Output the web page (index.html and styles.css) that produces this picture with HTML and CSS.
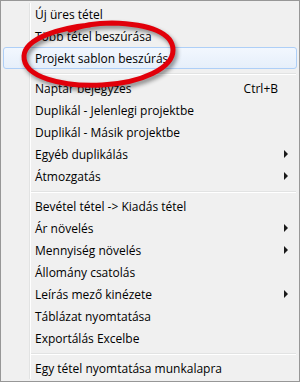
FILE: index.html
```html
<!DOCTYPE html>
<html lang="hu">
<head>
  <meta charset="UTF-8" />
  <title>Menü</title>
  <link rel="stylesheet" href="styles.css">
</head>
<body>
  <div class="menu">
    <ul class="list">
      <li class="item">Új üres tétel</li>
      <li class="item">Több tétel beszúrása</li>
      <li class="item hot">Projekt sablon beszúrás</li>
      <li class="sep"></li>
      <li class="item">Naptár bejegyzés<span class="key">Ctrl+B</span></li>
      <li class="item">Duplikál - Jelenlegi projektbe</li>
      <li class="item">Duplikál - Másik projektbe</li>
      <li class="item">Egyéb duplikálás<span class="arrow"></span></li>
      <li class="item">Átmozgatás<span class="arrow"></span></li>
      <li class="sep"></li>
      <li class="item">Bevétel tétel -&gt; Kiadás tétel</li>
      <li class="item">Ár növelés<span class="arrow"></span></li>
      <li class="item">Mennyiség növelés<span class="arrow"></span></li>
      <li class="item">Állomány csatolás</li>
      <li class="item">Leírás mező kinézete<span class="arrow"></span></li>
      <li class="item">Táblázat nyomtatása</li>
      <li class="item">Exportálás Excelbe</li>
      <li class="sep"></li>
      <li class="item">Egy tétel nyomtatása munkalapra</li>
    </ul>

    <!-- hand drawn red marker over the menu -->
    <svg class="mark" width="300" height="382" viewBox="0 0 300 382">
      <path d="M90 25 C 60 28, 25 38, 24 56 C 23 77, 62 87, 102 85 C 142 83, 173 68, 173 50 C 173 33, 150 24, 112 23 C 96 23, 80 26, 70 30"
            fill="none" stroke="#E1000A" stroke-width="5" stroke-linecap="round"/>
    </svg>
  </div>
</body>
</html>
```

FILE: styles.css
```css
* {
  box-sizing: border-box;
}

body {
  margin: 0;
  background: #ffffff;
}

.menu {
  position: relative;
  width: 300px;
  height: 382px;
  padding: 2px;
  border: 1px solid #979797;
  background: #f0f0f0;
  font-family: 'Open Sans', 'Noto Sans', sans-serif;
  font-size: 12px;
  color: #000;
}

.list {
  list-style: none;
  margin: 0;
  padding: 0;
  height: 100%;
  /* gutter line next to the icon column */
  background: linear-gradient(to right,
    transparent 26px, #e2e3e3 26px, #e2e3e3 27px,
    #ffffff 27px, #ffffff 28px, transparent 28px);
}

.item {
  display: flex;
  align-items: center;
  height: 22px;
  padding-left: 32px;
  white-space: nowrap;
}

.item.hot {
  padding-left: 31px;
  border: 1px solid #aecff7;
  border-radius: 3px;
  background: linear-gradient(#f2f7fe, #e6effa);
}

.key {
  margin-left: auto;
  padding-right: 19px;
}

.arrow {
  margin-left: auto;
  margin-right: 9px;
  width: 0;
  height: 0;
  border-left: 4px solid #1a1a1a;
  border-top: 4px solid transparent;
  border-bottom: 4px solid transparent;
}

.sep {
  height: 8px;
  margin-left: 28px;
  margin-right: 1px;
  background: linear-gradient(
    transparent 4px, #e2e3e3 4px, #e2e3e3 5px,
    #ffffff 5px, #ffffff 6px, transparent 6px);
}

.mark {
  position: absolute;
  top: -1px;
  left: -1px;
  pointer-events: none;
  filter: drop-shadow(2px 3px 2px rgba(0, 0, 0, 0.45));
}
```
